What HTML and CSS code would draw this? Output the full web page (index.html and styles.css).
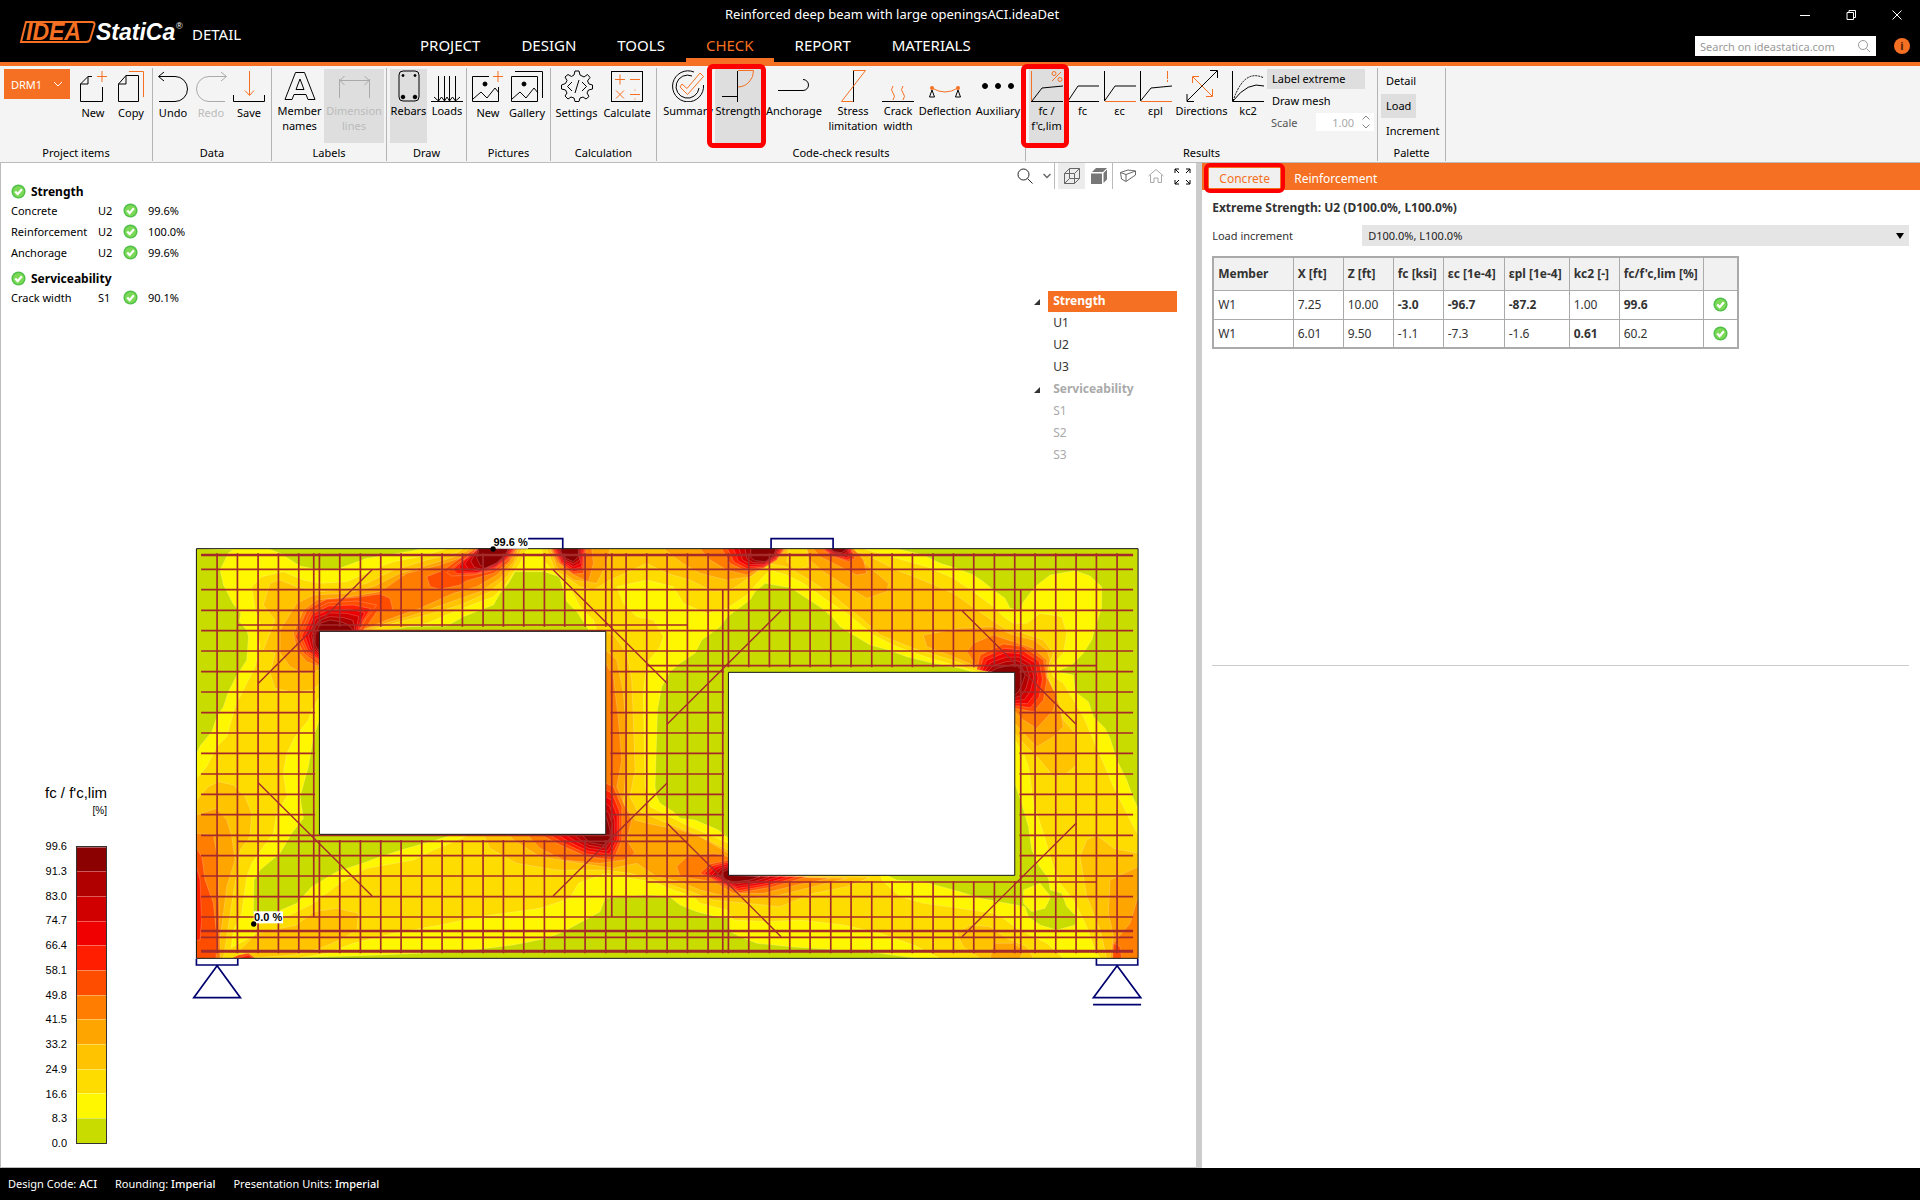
FILE: index.html
```html
<!DOCTYPE html>
<html lang="en">
<head>
<meta charset="utf-8">
<title>Reinforced deep beam with large openingsACI.ideaDet</title>
<link rel="stylesheet" href="styles.css">
<script src="plot.js" defer></script>
</head>
<body>
<svg width="0" height="0" class="defs" aria-hidden="true">
  <symbol id="ok" viewBox="0 0 16 16"><circle cx="8" cy="8" r="7.5" fill="#4fbf48"/><circle cx="8" cy="8" r="6" fill="#7bd957"/><path d="M4.5 8l2.6 2.8L11.6 5.6" fill="none" stroke="#fff" stroke-width="2.4"/></symbol>
</svg>
<header class="titlebar">
  <div class="brand">
    <svg class="logo" width="172" height="30" viewBox="0 0 172 30" role="img" aria-label="IDEA StatiCa">
      <path d="M7 5H73Q76 5 75.500 8L71 23Q70 25 67 25H2Z" fill="#000" stroke="#f57022" stroke-width="2"/>
      <text x="7" y="23" class="logo-idea">IDEA</text>
      <text x="77" y="23" class="logo-name">StatiCa</text>
      <text x="157" y="12" class="logo-reg">®</text>
    </svg>
    <span class="product">DETAIL</span>
  </div>
  <div class="head-main">
    <h1 class="doc-title">Reinforced deep beam with large openingsACI.ideaDet</h1>
    <nav class="tabs">
      <a href="#">PROJECT</a><a href="#">DESIGN</a><a href="#">TOOLS</a><a href="#" class="active">CHECK</a><a href="#">REPORT</a><a href="#">MATERIALS</a>
    </nav>
  </div>
  <div class="head-side">
    <div class="window-buttons">
      <button aria-label="Minimize"><svg width="12" height="12" viewBox="0 0 12 12"><path d="M1 6.500h10"/></svg></button>
      <button aria-label="Restore"><svg width="12" height="12" viewBox="0 0 12 12"><path d="M2 3.500h6.500V10.500H2zM4 3.500V1.500H10.500V8.500H8.500"/></svg></button>
      <button aria-label="Close"><svg width="12" height="12" viewBox="0 0 12 12"><path d="M1.500 1.500l9 9M10.500 1.500l-9 9"/></svg></button>
    </div>
    <div class="head-tools">
      <label class="search"><input type="text" placeholder="Search on ideastatica.com" aria-label="Search on ideastatica.com"><svg width="14" height="14" viewBox="0 0 14 14"><circle cx="6" cy="6" r="4.500"/><path d="M9.500 9.500l3.500 3.500"/></svg></label>
      <button class="info" aria-label="Information">i</button>
    </div>
  </div>
</header>

<div class="ribbon">
  <section class="group project">
    <div class="items">
      <button class="drm">DRM1<svg width="10" height="6" viewBox="0 0 10 6"><path d="M1 1l4 4 4-4" fill="none" stroke="#fff"/></svg></button>
      <button class="item low"><svg viewBox="0 0 32 32"><path d="M15 6.500H11L3.500 14V31.500H25.500V17M3.500 14H11V6.500"/><path class="o" d="M20 6.500h10M25 1v11"/></svg>New</button>
      <button class="item low"><svg viewBox="0 0 32 32"><path d="M11 5.500H23.500V31.500H3.500V14zM3.500 14H11V5.500"/><path class="o" d="M14 1.500H28.500V27"/></svg>Copy</button>
    </div><h2>Project items</h2>
  </section>
  <section class="group data">
    <div class="items">
      <button class="item low"><svg viewBox="0 0 32 32"><path d="M2 31.500H18A12.500 12.500 0 0 0 18 6.500H2M7 2L1.500 6.500L7 11"/></svg>Undo</button>
      <button class="item low" disabled><svg viewBox="0 0 32 32"><path d="M30 31.500H14A12.500 12.500 0 0 1 14 6.500H31M26 2L31.500 6.500L26 11"/></svg>Redo</button>
      <button class="item low"><svg viewBox="0 0 32 32"><path d="M.5 25V31.500H31.500V25"/><path class="o" d="M16.500 1V25M12 20.500L16.500 25.500L21 20.500"/></svg>Save</button>
    </div><h2>Data</h2>
  </section>
  <section class="group labels">
    <div class="items">
      <button class="item"><svg viewBox="0 0 32 32"><path d="M11.500 2.500H20.500L31 29.500H24L22 24.500H10L8 29.500H1L11.500 2.500zM16 9L12 19.500H20z"/></svg>Member names</button>
      <button class="item on" disabled><svg viewBox="0 0 32 32"><path d="M1.500 9V28M31.500 9V28M2 10.500H31M6.500 6L2 10.500L6.500 15M26.500 6L31 10.500L26.500 15"/></svg>Dimension lines</button>
    </div><h2>Labels</h2>
  </section>
  <section class="group draw">
    <div class="items">
      <button class="item on"><svg viewBox="0 0 32 32"><rect x="6" y="1" width="20" height="30" rx="4"/><circle class="f" cx="10" cy="5.500" r="1"/><circle class="f" cx="22" cy="5.500" r="1"/><circle class="f" cx="10" cy="27" r="1.800"/><circle class="f" cx="22" cy="27" r="1.800"/></svg>Rebars</button>
      <button class="item"><svg viewBox="0 0 32 32"><path d="M0 31.500H32M7.500 6V31M13.500 6V31M18.500 6V31M24.500 6V31M3 27l4.500 4L10.500 27L13.500 31L16 27L18.500 31L21.500 27L24.500 31L29 27"/></svg>Loads</button>
    </div><h2>Draw</h2>
  </section>
  <section class="group pictures">
    <div class="items">
      <button class="item low"><svg viewBox="0 0 32 32"><path d="M17 6.500H.5V31.500H26.500V17M1 29l8-7 6 6 8-10 4 5"/><circle class="f" cx="13" cy="14" r="2"/><path class="o" d="M21 6.500h10M26 1v11"/></svg>New</button>
      <button class="item low"><svg viewBox="0 0 32 32"><path d="M.5 6.500H26.500V31.500H.5zM4 1.500H31.500V28M1 29l8-7 6 6 8-10 4 5"/><circle class="f" cx="13" cy="14" r="2"/></svg>Gallery</button>
    </div><h2>Pictures</h2>
  </section>
  <section class="group calc">
    <div class="items">
      <button class="item low"><svg viewBox="0 0 32 32"><path d="M13 5L14 1H18L19 5L23 7L26.500 4.500L29 7.500L26.500 11L28 14L31.500 15V19L27.500 20L26 23L28 26.500L25 29L22 27L19 28L18 31.500H14L13 28L10 27L7 29L4 26L6 23L4.500 20L.5 19V15L4.500 13.500L6 10.500L4 7L7 4.500L10.500 6.500zM11 12L6.500 16.500L11 21M21 12L25.500 16.500L21 21M18 10L14 23"/></svg>Settings</button>
      <button class="item low"><svg viewBox="0 0 32 32"><rect x=".5" y="1.500" width="31" height="30"/><path class="o" d="M4 9.500h10M9 4.500v10M19 9.500h10M5 20.500l8 8M13 20.500l-8 8M19 24.500h10M23.500 20h1M23.500 29h1"/></svg>Calculate</button>
    </div><h2>Calculation</h2>
  </section>
  <section class="group codecheck">
    <div class="items">
      <button class="item"><svg viewBox="0 0 32 32"><path d="M22 2A15.500 15.500 0 1 0 31.500 15M20 6A11.500 11.500 0 1 0 27 18"/><path class="o" d="M10 14L15 18.500L28 3L31.500 6.500L15.500 24.500L8 17z"/></svg>Summary</button>
      <button class="item on marked"><svg viewBox="0 0 32 32"><path d="M0 26.500H15M15.500 1V32"/><path class="o" d="M16 .5H31.500A16 16 0 0 1 16 17"/></svg>Strength</button>
      <button class="item"><svg viewBox="0 0 32 32"><path d="M0 20.500H25A5 5 0 0 0 25 9.500"/></svg>Anchorage</button>
      <button class="item"><svg viewBox="0 0 32 32"><path d="M16.500 1V32"/><path class="o" d="M16 .5H28.500L4.500 31.500H16"/></svg>Stress limitation</button>
      <button class="item"><svg viewBox="0 0 32 32"><path d="M0 31.500H32"/><path class="o" d="M11 16q-3 4 0 7t0 7M21 16q-3 4 0 7t0 7"/></svg>Crack width</button>
      <button class="item"><svg viewBox="0 0 32 32"><path d="M3 20l-2.500 7h5zM29 20l-2.500 7h5z"/><path class="o" d="M3 18Q16 26 29 18"/><circle class="fo" cx="3" cy="18" r="2"/><circle class="fo" cx="29" cy="18" r="2"/></svg>Deflection</button>
      <button class="item"><svg viewBox="0 0 32 32"><circle class="f" cx="3" cy="16" r="2.500"/><circle class="f" cx="16" cy="16" r="2.500"/><circle class="f" cx="29" cy="16" r="2.500"/></svg>Auxiliary</button>
    </div><h2>Code-check results</h2>
  </section>
  <section class="group results">
    <div class="items">
      <button class="item on marked"><svg viewBox="0 0 32 32"><path d="M0 31.500H32M1 31L11 18L32 16"/><path class="o" d="M.5 1V31M30 2L21 11"/><circle class="o" cx="23" cy="3.500" r="2"/><circle class="o" cx="29" cy="9.500" r="2"/></svg>fc / f'c,lim</button>
      <button class="item"><svg viewBox="0 0 32 32"><path d="M.5 1V31.500H32M1 31L11 16H32"/></svg>fc</button>
      <button class="item"><svg viewBox="0 0 32 32"><path d="M.5 1V31L11 16H32"/><path class="o" d="M1 31.500H32"/></svg>εc</button>
      <button class="item"><svg viewBox="0 0 32 32"><path d="M.5 1V31L11 18L32 16"/><path class="o" d="M1 31.500H32M27.500 1V9M27.500 10V12"/></svg>εpl</button>
      <button class="item"><svg viewBox="0 0 32 32"><path d="M1 31L31 1M1 24V31.500H8M24 .5H31.500V8"/><path class="o" d="M7 7L26 26M6.500 13V6.500H13M26.500 19V26.500H20"/></svg>Directions</button>
      <button class="item"><svg viewBox="0 0 32 32"><path d="M.5 1V31.500H32M1 31Q16 11 32 16"/><path d="M1 31Q12 -2 32 8" stroke-dasharray="2 1"/></svg>kc2</button>
      <div class="stack">
        <button class="line on">Label extreme</button>
        <button class="line">Draw mesh</button>
        <label class="scale">Scale<span class="spin"><input type="text" value="1.00" disabled><svg width="8" height="14" viewBox="0 0 8 14"><path d="M.5 4.500L4 1l3.500 3.500M.5 9.500L4 13l3.500-3.500"/></svg></span></label>
      </div>
    </div><h2>Results</h2>
  </section>
  <section class="group palette">
    <div class="items"><button class="line">Detail</button><button class="line on">Load</button><button class="line">Increment</button></div>
    <h2>Palette</h2>
  </section>
</div>

<main>
  <section class="viewport">
    <svg class="drawing" viewBox="-537 -1071 3585 3012" role="img" aria-label="Concrete utilisation of the beam">
      <clipPath id="beam"><path d="M49 86H2874V1315H49z"/></clipPath>
      <g class="field" clip-path="url(#beam)">
        <path class="v2" d="M49 86H2874V1315H49z"/>
        <g class="v1">
          <path d="M49 86L160 90L145 98L120 150L130 195L158 250L182 280L178 305L200 330L205 350L200 420L168 470L145 515L130 560L110 590L95 635L62 675L49 700z"/>
          <path d="M265 86L300 100L360 138L420 150L470 148L560 115L600 108L700 92L720 86z"/>
          <path d="M1005 155L1093 155L1138 170L1160 245L1190 275L1220 320L1228 334H590L640 320L800 318L850 290L940 255L960 220L985 190z"/>
          <path d="M418 600L400 650L385 740L360 830L370 895L335 940L300 1000L240 1050L222 1080L220 1180L290 1175L350 1150L395 1100L470 1055L560 1025L600 1010L680 985L750 965L825 943H418z"/>
          <path d="M1430 830L1425 800L1430 640L1432 570L1445 500L1470 455L1500 430L1545 400L1565 360L1620 320L1642 290L1710 240L1725 215L1755 190L1830 203L1880 235L1925 265L1955 290L1980 320L2020 345L2070 375L2125 390L2180 410L2260 430L2340 445L2380 457H1645V955L1615 930L1580 915L1545 900L1500 895L1480 875L1440 850z"/>
          <path d="M300 1315L600 1305L830 1295L1000 1275L1100 1255L1150 1235L1215 1200L1260 1175L1275 1135L1400 1125L1468 1130L1500 1155L1550 1175L1610 1190L1645 1195L1650 1235L1680 1250L1730 1270L1830 1280L1980 1290L2100 1300L2210 1315z"/>
          <path d="M2150 86L2230 105L2280 130L2330 145L2380 165L2410 185L2440 210L2475 235L2490 265L2520 270L2530 245L2565 200L2610 165L2685 152L2730 168L2765 200V260L2750 310L2735 360L2710 400L2675 435L2630 455L2680 465L2685 515L2725 545L2740 590L2775 625L2790 655L2810 720L2840 780L2860 835L2874 865V86z"/>
          <path d="M2504 790L2525 850L2545 920L2555 990L2575 1035L2605 1075L2610 1110L2645 1120L2660 1160L2690 1190L2685 1215L2630 1230L2580 1215L2545 1190L2535 1160L2400 1135L2340 1115L2230 1085L2150 1080L2120 1066H2504z"/>
        </g>
        <path class="v2" d="M2530 1110L2580 1090L2612 1130L2595 1165L2555 1175L2530 1150z"/>
        <g class="v3">
          <path d="M49 775L80 740L110 680L140 650L165 560L190 510L225 440L240 380L230 330L240 310L225 270L215 200L245 170L310 155L370 180L420 190L500 185L545 165L600 140L640 125L720 110L800 86H1040L1020 130L975 195L940 230L860 260L800 285L740 310L660 325L590 334H418V530L395 570L385 600L345 650L320 700L310 760L320 830L290 880L280 940L250 980L215 1030L200 1070L185 1180L160 1230L150 1315H49z"/>
          <path d="M1085 86L1090 120L1130 165L1165 195L1200 260L1240 300L1250 334H1277V943H870L820 965L760 990L700 1020L560 1045L480 1090L400 1150L330 1185L230 1215L225 1245L140 1290L100 1315H350L440 1300L520 1270L640 1240L780 1215L900 1190L1080 1165L1170 1135L1195 1090L1277 1060L1350 1075L1420 1085L1480 1110L1540 1130L1560 1150L1640 1170L1660 1200L1760 1205L1860 1200L1990 1215L2100 1240L2200 1275L2280 1315H2650L2600 1270L2560 1250L2510 1225L2470 1195L2440 1180L2340 1165L2230 1150L2160 1130L2110 1085L2100 1066H1645V970L1590 945L1530 920L1470 890L1410 860L1395 800L1390 520L1400 430L1440 380L1450 350L1420 300L1370 290L1330 250L1310 200L1400 180L1480 200L1510 250L1580 280L1640 265L1700 225L1740 180L1770 150L1820 165L1870 190L1940 240L2000 280L2080 345L2150 380L2250 415L2340 440L2400 457H2504V660L2530 700L2545 740L2560 850L2590 940L2620 1040L2640 1090L2680 1140L2720 1220L2745 1290L2760 1315H2874V945L2850 900L2800 800L2775 740L2740 660L2710 590L2680 540L2650 490L2620 470L2610 440L2650 400L2660 340L2645 290L2580 280L2540 310L2500 310L2470 290L2440 260L2380 215L2320 175L2240 140L2150 115L2050 86z"/>
        </g>
        <g class="v4">
          <path d="M49 840L85 800L115 785L160 795L195 830L215 880L210 950L180 990L170 1060L155 1150L140 1250L130 1315H49z"/>
          <path d="M250 255L270 190L300 180L350 200L420 215L500 205L560 190L640 150L740 120L830 98L850 86H1025L1010 120L985 165L930 215L840 255L740 285L640 310L560 334H418V490L400 510L330 515L285 505L270 460L285 400L250 390L285 300z"/>
          <path d="M230 1240L350 1215L400 1175L470 1165L535 1180L530 1230L480 1260L420 1285L340 1305L200 1315L180 1290z"/>
          <path d="M1100 86L1125 150L1200 200L1240 210L1290 180L1400 130L1460 160L1530 180L1600 215L1660 205L1720 165L1760 130L1820 140L1880 175L1950 220L2050 300L2100 345L2200 385L2300 415L2400 450L2504 457V640L2540 680L2580 720L2620 770L2660 760L2690 735L2685 640L2650 600L2620 520L2600 450L2620 400L2590 360L2530 340L2480 330L2420 290L2320 220L2250 190L2150 150L2060 105L2000 86z"/>
          <path d="M1277 334L1300 345L1340 400L1355 480L1360 600L1365 750L1350 830L1370 870L1450 905L1540 940L1645 990V1066L2070 1072L2000 1100L1900 1120L1800 1160L1700 1150L1600 1140L1520 1110L1440 1085L1350 1060L1277 1050L1130 1050L1010 1030L930 985L910 943H1277z"/>
          <path d="M2330 1240L2370 1215L2430 1220L2480 1255L2540 1280L2560 1315H2400L2350 1280zM2700 1010L2720 960L2750 945L2800 985L2874 1000V1315H2780L2760 1230L2720 1130z"/>
        </g>
        <path class="v3" d="M1825 86L1820 125L1845 150L1885 140L1880 86z"/>
        <g class="v5">
          <path d="M49 885L110 865L140 900L155 950L165 1020L140 1100L125 1220L110 1315H49z"/>
          <path d="M300 330L350 250L400 225L500 220L580 200L660 160L760 130L840 105L870 86H1015L1000 125L960 175L900 215L800 250L700 285L600 315L540 334H418V450L370 460L330 440L300 400z"/>
          <path d="M1110 86L1130 140L1180 180L1250 190L1280 130L1290 86z"/>
          <path d="M1277 390L1310 420L1330 520L1340 650L1335 780L1330 850L1365 900L1400 910L1500 930L1560 950L1645 1000V1066L2000 1075L1900 1100L1800 1125L1720 1135L1640 1130L1560 1110L1500 1085L1430 1070L1370 1030L1300 1045L1200 1030L1080 1010L1000 960L985 943H1277z"/>
          <path d="M1450 86L1500 125L1560 160L1640 180L1710 170L1750 140L1800 110L1820 86zM1880 86L1890 120L1930 155L2000 200L2060 235L2120 215L2125 190L2060 135L2010 100L1990 86z"/>
          <path d="M2230 345L2340 325L2440 320L2500 345L2560 360L2600 390L2610 420L2600 470L2640 560L2650 620L2620 650L2570 680L2540 650L2504 610V457L2390 440L2320 410L2240 380z"/>
          <path d="M2790 1080L2874 1040V1315H2790L2800 1250L2785 1180zM2440 1270L2500 1270L2530 1290L2520 1315H2430z"/>
        </g>
        <g class="v6">
          <path d="M49 940L100 945L110 1000L115 1100L118 1180L120 1315H49z"/>
          <path d="M340 340L370 270L410 240L510 230L600 215L680 160L780 135L850 110L880 86H1010L990 125L950 165L890 200L820 220L720 265L620 300L560 325L520 334H418V440L380 425L350 390z"/>
          <path d="M1113 86L1130 125L1180 165L1225 185L1240 130L1235 86z"/>
          <path d="M1277 430L1300 470L1315 600L1325 720L1310 800L1335 860L1355 900L1340 960L1365 1000L1330 1020L1260 1030L1150 1020L1080 985L1040 943H1277z"/>
          <path d="M1490 1040L1520 1010L1600 1000L1645 1010V1066L1950 1075L1850 1095L1750 1120L1660 1120L1600 1085L1500 1070z"/>
          <path d="M1560 86L1590 120L1640 150L1700 165L1750 140L1790 115L1815 86zM1900 86L1920 110L1980 140L2030 165L2060 160L2050 120L2020 86z"/>
          <path d="M2360 395L2380 370L2440 345L2500 365L2560 385L2600 420L2600 470L2630 530L2620 570L2570 625L2530 600L2504 575V457L2390 440z"/>
          <path d="M2874 1130V1315H2800V1270L2850 1210z"/>
        </g>
        <g class="v7">
          <path d="M49 985L65 1010L75 1080L100 1150L110 1250L108 1315H49zM2800 1270L2820 1280L2825 1315H2798zM155 1315L175 1305L205 1300L225 1315z"/>
          <path d="M740 170L790 150L850 108L890 86H1007L985 125L940 160L860 182L840 195L780 208L750 200z"/>
          <path d="M346 350L382 268L440 238L530 232L600 222L630 235L638 270L590 275L565 312L545 334H418V436L372 400z"/>
        </g>
        <path class="v8" d="M49 1040L60 1080L64 1200L60 1260H49zM170 1315L205 1305L218 1315z"/>
        <g id="peaks"></g>
      </g>
      <path id="mesh" class="bar"/>
      <path class="bar diag" d="M235 490L576 149M1119 149L1461 490M235 789L576 1128M1119 1128L1461 789M1461 613L1803 272M2346 272L2688 613M1461 910L1803 1250M2346 1250L2688 910"/>
      <path class="bar thick" d="M63 105H2859M63 1233H2859"/>
      <path class="bar main" d="M63 1294H2859"/>
      <g class="edge"><path class="hole" d="M418 334H1277V943H418zM1645 457H2504V1066H1645z"/><path d="M49 86H2874V1315H49z"/></g>
      <path class="support" d="M962 86V56H1148V86M1773 86V56H1959V86M49 1316V1335H173V1316M111 1337L41 1433H181zM2749 1316V1335H2873V1316M2811 1337L2740 1433H2882zM2739 1454H2883"/>
      <rect class="tag" x="938" y="50" width="106" height="36"/><rect class="tag" x="221" y="1174" width="88" height="36"/>
      <circle cx="939" cy="87" r="8"/><circle cx="221" cy="1212" r="8"/>
      <text class="tag-text" x="940" y="77">99.6 %</text><text class="tag-text" x="222" y="1202">0.0 %</text>
    </svg>

    <div class="summary">
      <h3><svg><use href="#ok"/></svg>Strength</h3>
      <table>
        <tr><td>Concrete</td><td>U2</td><td><svg><use href="#ok"/></svg></td><td>99.6%</td></tr>
        <tr><td>Reinforcement</td><td>U2</td><td><svg><use href="#ok"/></svg></td><td>100.0%</td></tr>
        <tr><td>Anchorage</td><td>U2</td><td><svg><use href="#ok"/></svg></td><td>99.6%</td></tr>
      </table>
      <h3><svg><use href="#ok"/></svg>Serviceability</h3>
      <table>
        <tr><td>Crack width</td><td>S1</td><td><svg><use href="#ok"/></svg></td><td>90.1%</td></tr>
      </table>
    </div>

    <div class="viewtools">
      <button class="wide" aria-label="Zoom"><svg width="16" height="16" viewBox="0 0 16 16"><circle cx="6.500" cy="6.500" r="5.500"/><path d="M10.500 10.500l5 5"/></svg></button>
      <button class="slim" aria-label="Zoom options"><svg width="8" height="6" viewBox="0 0 8 6"><path d="M.5 1L4 4.500L7.500 1" stroke-width="1.500"/></svg></button>
      <button class="on" aria-label="Wireframe"><svg width="16" height="16" viewBox="0 0 16 16"><path d="M.5 5.500h10v10H.5zM5.500 .5H15.500V10.500H5.500zM.5 5.500L5.500 .5M10.500 5.500L15.500 .5M10.500 15.500L15.500 10.500M.5 15.500L5.500 10.500"/></svg></button>
      <button aria-label="Solid"><svg width="16" height="16" viewBox="0 0 16 16"><path d="M0 5.500h11V16H0zM1 4L5 0H16L12 4zM12.500 5L16 1.500V11.500L12.500 15z" fill="#777" stroke="none"/></svg></button>
      <button class="split" aria-label="Section"><svg width="16" height="14" viewBox="0 0 16 14"><path d="M.5 3.500L8 1L15.500 2V6L6 12.500L1.500 10zM.5 3.500L6 5.500L15.500 2M6 5.500V12"/></svg></button>
      <button class="pale" aria-label="Home"><svg width="16" height="14" viewBox="0 0 16 14"><path d="M.5 7L8 .5L15.500 7M2.500 6V13.500H6V9h4v4.500h3.500V6"/></svg></button>
      <button class="dark" aria-label="Fit"><svg width="17" height="17" viewBox="0 0 17 17"><path d="M1 5V1H5M1 1l4 4M12 1h4V5M16 1l-4 4M1 12v4H5M1 16l4-4M16 12v4H12M16 16l-4-4"/></svg></button>
    </div>

    <ul class="tree">
      <li class="parent selected"><span>Strength</span></li><li><span>U1</span></li><li><span>U2</span></li><li><span>U3</span></li>
      <li class="parent off"><span>Serviceability</span></li><li class="off"><span>S1</span></li><li class="off"><span>S2</span></li><li class="off"><span>S3</span></li>
    </ul>

    <div class="legend">
      <div class="legend-title">fc / f'c,lim</div><div class="legend-unit">[%]</div>
      <div class="legend-body">
        <ol><li>99.6</li><li>91.3</li><li>83.0</li><li>74.7</li><li>66.4</li><li>58.1</li><li>49.8</li><li>41.5</li><li>33.2</li><li>24.9</li><li>16.6</li><li>8.3</li><li>0.0</li></ol>
        <div class="scalebar"><i class="v12"></i><i class="v11"></i><i class="v10"></i><i class="v9"></i><i class="v8"></i><i class="v7"></i><i class="v6"></i><i class="v5"></i><i class="v4"></i><i class="v3"></i><i class="v2"></i><i class="v1"></i></div>
      </div>
    </div>
  </section>

  <aside class="panel">
    <nav class="panel-tabs"><button class="active">Concrete</button><button>Reinforcement</button></nav>
    <div class="panel-body">
      <h3>Extreme Strength: U2 (D100.0%, L100.0%)</h3>
      <div class="field-row"><label for="inc">Load increment</label><div class="select"><select id="inc"><option>D100.0%, L100.0%</option></select></div></div>
      <table class="grid">
        <colgroup><col class="c80"><col class="c50"><col class="c50"><col class="c50"><col class="c61"><col class="c65"><col class="c50"><col class="c84"><col class="c35"></colgroup>
        <thead><tr><th>Member</th><th>X [ft]</th><th>Z [ft]</th><th>fc [ksi]</th><th>εc [1e-4]</th><th>εpl [1e-4]</th><th>kc2 [-]</th><th>fc/f'c,lim [%]</th><th></th></tr></thead>
        <tbody>
          <tr><td>W1</td><td>7.25</td><td>10.00</td><td><b>-3.0</b></td><td><b>-96.7</b></td><td><b>-87.2</b></td><td>1.00</td><td><b>99.6</b></td><td><svg><use href="#ok"/></svg></td></tr>
          <tr><td>W1</td><td>6.01</td><td>9.50</td><td>-1.1</td><td>-7.3</td><td>-1.6</td><td><b>0.61</b></td><td>60.2</td><td><svg><use href="#ok"/></svg></td></tr>
        </tbody>
      </table>
      <hr>
    </div>
  </aside>
</main>
<footer><span>Design Code: <b>ACI</b></span><span>Rounding: <b>Imperial</b></span><span>Presentation Units: <b>Imperial</b></span></footer>
</body>
</html>
```
FILE: styles.css
```css
* { box-sizing: border-box; }
html, body { height: 100%; }
body { margin: 0; display: flex; flex-direction: column; background: #fff; color: #000; font: 12px/15px "Noto Sans", "Open Sans", sans-serif; overflow: hidden; }
h1, h2, h3, ul, ol { margin: 0; padding: 0; font: inherit; list-style: none; }
button, input, select { font: inherit; color: inherit; border: 0; background: none; padding: 0; margin: 0; }
.defs { position: absolute; }

/* Title bar */
.titlebar { display: flex; height: 66px; flex: none; background: #000; color: #fff; border-bottom: 4px solid #f57022; }
.brand { width: 400px; padding: 17px 0 0 19px; display: flex; align-items: flex-start; }
.logo-idea { font: italic bold 23px "Liberation Sans", sans-serif; fill: #f57022; }
.logo-name { font: italic bold 23px "Liberation Sans", sans-serif; fill: #fff; }
.logo-reg { font: 9px "Liberation Sans", sans-serif; fill: #fff; }
.product { font-size: 15px; line-height: 20px; margin: 7px 0 0 1px; }
.head-main { flex: 1; display: flex; flex-direction: column; justify-content: space-between; }
.doc-title { padding: 4px 0 0 325px; line-height: 20px; font-size: 13px; }
.tabs { display: flex; gap: 1px; }
.tabs a { padding: 0 20px 3px; border-bottom: 4px solid transparent; color: #fff; text-decoration: none; font-size: 15px; line-height: 20px; }
.tabs a.active { color: #f57022; border-color: #f57022; }
.head-side { display: flex; flex-direction: column; align-items: flex-end; }
.window-buttons { display: flex; height: 30px; }
.window-buttons button { width: 46px; }
.window-buttons svg { fill: none; stroke: #fff; display: block; margin: auto; }
.head-tools { display: flex; align-items: center; gap: 18px; padding: 6px 10px 0 0; }
.search { display: flex; align-items: center; width: 181px; height: 20px; padding: 0 5px; background: #fff; }
.search input { flex: 1; min-width: 0; font-size: 11px; outline: 0; }
.search input::placeholder { color: #999; }
.search svg { fill: none; stroke: #999; }
.info { width: 16px; height: 16px; border-radius: 50%; background: #f57022; color: #512308; font-weight: bold; font-size: 11px; line-height: 16px; }

/* Ribbon */
.ribbon { display: flex; flex: none; height: 97px; padding: 2px 0 1px; background: #f4f4f4; border-bottom: 1px solid #bcbcbc; }
.group { display: flex; flex-direction: column; border-right: 1px solid #b4b4b4; }
.items { display: grid; flex: 1; padding: 1px 0 0; align-items: start; font-size: 11px; }
.group h2 { text-align: center; font-size: 11px; line-height: 16px; }
.item { position: relative; display: flex; flex-direction: column; align-items: center; height: 74px; padding-top: 1px; line-height: 15px; text-align: center; min-width: 0; }
.item svg { width: 32px; height: 32px; margin-bottom: 1px; flex: none; fill: none; stroke: #000; }
.item.low svg { margin-bottom: 3px; }
.item .o { stroke: #f57022; }
.item .f { fill: #000; }
.item .fo { fill: #f57022; stroke: none; }
.item:disabled { color: #bbb; }
.item:disabled svg { stroke: #aaa; }
.on { background: #dedede; }
.marked::after { content: ""; position: absolute; inset: -5px -5px -5px -8px; border: 5px solid #f00; border-radius: 6px; z-index: 1; }
.project { width: 153px; } .project .items { grid-template-columns: 70px 38px 38px; padding-left: 4px; }
.data { width: 119px; } .data .items { grid-template-columns: 38px 38px 38px; padding-left: 1px; }
.labels { width: 115px; } .labels .items { grid-template-columns: 49px 60px; padding-left: 3px; }
.draw { width: 80px; } .draw .items { grid-template-columns: 37px 38px; padding-left: 3px; column-gap: 1px; }
.pictures { width: 84px; } .pictures .items { grid-template-columns: 38px 40px; padding-left: 2px; }
.calc { width: 106px; } .calc .items { grid-template-columns: 47px 54px; padding-left: 2px; }
.codecheck { width: 369px; } .codecheck .items { grid-template-columns: 54px 46px 66px 52px 38px 56px 50px; padding-left: 4px; }
.results { width: 352px; } .results .items { grid-template-columns: 35px 37px 37px 35px 57px 36px 108px; padding-left: 3px; }
.palette { width: 68px; } .palette .items { padding: 1px 0 0 3px; justify-items: start; align-content: start; row-gap: 1px; }
.drm { width: 66px; height: 30px; background: #f57022; color: #fff; display: flex; align-items: center; justify-content: space-between; padding: 0 7px; }
.stack { display: flex; flex-direction: column; align-items: flex-start; gap: 2px; padding-left: 1px; }
.line { height: 20px; padding: 0 5px; text-align: left; line-height: 20px; }
.stack .line:first-child { width: 98px; }
.palette .line { height: 24px; padding: 0 5px; line-height: 24px; }
.scale { display: flex; justify-content: space-between; align-items: center; width: 107px; padding-left: 4px; color: #555; }
.spin { display: flex; align-items: center; width: 58px; height: 18px; background: #fff; padding-right: 4px; }
.spin input { width: 38px; text-align: right; color: #aaa; margin-right: auto; }
.spin svg { fill: none; stroke: #888; }

/* Workspace */
main { flex: 1; min-height: 0; display: flex; }
.viewport { flex: 1; min-width: 0; position: relative; border: solid #bcbcbc; border-width: 0 0 1px 1px; }
.drawing { position: absolute; inset: 0; width: 100%; height: 100%; }
.v1 { fill: #c8dc00; background: #c8dc00; } .v2 { fill: #fff700; background: #fff700; } .v3 { fill: #ffdc00; background: #ffdc00; }
.v4 { fill: #ffc300; background: #ffc300; } .v5 { fill: #ffa500; background: #ffa500; } .v6 { fill: #ff7d00; background: #ff7d00; }
.v7 { fill: #ff4d00; background: #ff4d00; } .v8 { fill: #ff1e00; background: #ff1e00; } .v9 { fill: #f00000; background: #f00000; }
.v10 { fill: #d00000; background: #d00000; } .v11 { fill: #b00000; background: #b00000; } .v12 { fill: #8b0000; background: #8b0000; }
.field { stroke: rgba(255, 255, 255, .3); stroke-width: 2; }
.bar { fill: none; stroke: #a52a2a; stroke-width: 5; }
.bar.diag { stroke-width: 4; } .bar.thick { stroke-width: 7; } .bar.main { stroke-width: 9; }
.edge { fill: none; stroke: #111; stroke-width: 3; }
.hole { fill: #fff; }
.support { fill: none; stroke: #000070; stroke-width: 5; }
.tag { fill: #fff; }
.tag-text { font: bold 33px "Liberation Sans", sans-serif; }

.summary { position: absolute; left: 10px; top: 19px; font-size: 11px; }
.summary h3 { display: flex; align-items: center; gap: 5px; height: 18px; font-weight: bold; font-size: 12px; }
.summary svg, .grid svg { width: 15px; height: 15px; display: block; }
.summary table { border-collapse: collapse; margin-bottom: 6px; }
.summary td { height: 21px; padding: 0; }
.summary td:nth-child(1) { width: 87px; } .summary td:nth-child(2) { width: 25px; } .summary td:nth-child(3) { width: 25px; }

.viewtools { position: absolute; right: 0; top: 0; display: flex; height: 26px; }
.viewtools button { width: 27px; display: grid; place-items: center; }
.viewtools .wide { width: 30px; } .viewtools .slim { width: 15px; border-right: 1px solid #bbb; margin-right: 3px; }
.viewtools .on { background: #ececec; }
.viewtools .split { border-left: 1px solid #bbb; width: 30px; }
.viewtools svg { fill: none; stroke: #666; }
.viewtools .wide svg { stroke: #222; }
.viewtools .pale svg { stroke: #aaa; } .viewtools .dark svg { stroke: #000; }

.tree { position: absolute; right: 19px; top: 128px; width: 129px; color: #333; }
.tree li { position: relative; height: 22px; line-height: 20px; }
.tree span { display: block; height: 21px; padding: 0 5px; }
.tree .parent { font-weight: bold; }
.tree .parent::before { content: ""; position: absolute; left: -14px; top: 8px; border: 3px solid #333; border-top-color: transparent; border-left-color: transparent; }
.tree .selected span { background: #f57022; color: #fff; }
.tree .off { color: #aaa; }

.legend { position: absolute; left: 32px; bottom: 17px; width: 74px; font-family: "Liberation Sans", sans-serif; text-align: right; }
.legend-title { font-size: 15px; line-height: 20px; white-space: nowrap; }
.legend-unit { font-size: 10px; line-height: 16px; margin-bottom: 20px; }
.legend-body { display: flex; justify-content: flex-end; align-items: center; gap: 9px; }
.legend ol { display: flex; flex-direction: column; justify-content: space-between; height: 311px; line-height: 14px; font-size: 11px; }
.scalebar { display: flex; flex-direction: column; width: 31px; height: 298px; border: 1px solid #333; }
.scalebar i { flex: 1; border-top: 1px solid rgba(255, 255, 255, .35); }

/* Results panel */
.panel { width: 37.7%; border-left: 6px solid #ccc; }
.panel-tabs { display: flex; height: 27px; padding: 5px 7px 2px; background: #f57022; color: #fff; }
.panel-tabs button { position: relative; padding: 0; margin-right: 14px; }
.panel-tabs .active { width: 71px; background: #f0f0f0; color: #f57022; }
.panel-tabs .active::after { content: ""; position: absolute; inset: -5px; border: 4px solid #f00; border-radius: 6px; }
.panel-body { padding: 9px 11px 0 10px; color: #333; }
.panel-body h3 { font-weight: bold; line-height: 18px; margin-bottom: 8px; }
.field-row { display: flex; align-items: center; font-size: 11px; }
.field-row label { width: 150px; }
.select { flex: 1; position: relative; }
.select select { width: 100%; height: 21px; padding: 0 6px; appearance: none; background: #e5e5e5; color: #222; }
.select::after { content: ""; position: absolute; right: 5px; top: 8px; border: 4px solid transparent; border-top: 6px solid #000; border-bottom: 0; }
.grid { table-layout: fixed; width: 526px; margin-top: 10px; border-collapse: collapse; border: 2px solid #aaa; }
.grid th, .grid td { border: 1px solid #aaa; text-align: left; padding: 0 4px; height: 29px; white-space: nowrap; }
.grid th { height: 33px; background: #f1f1f1; }
.grid svg { margin: auto; }
.c80 { width: 80px; } .c50 { width: 50px; } .c61 { width: 61px; } .c65 { width: 65px; } .c84 { width: 84px; } .c35 { width: 35px; }
.panel hr { border: 0; border-top: 1px solid #ccc; margin: 316px 0 0; }

footer { flex: none; display: flex; align-items: center; gap: 18px; height: 32px; padding: 0 8px 2px; background: #000; color: #fff; font-size: 11px; }
footer b { font-weight: 500; }
```
FILE: plot.js
```js
// Rebar layout: a regular mesh, interrupted by the two openings.
const STEP = 61.36;
const mesh = [];
const v = (x, a, b) => mesh.push(`M${x} ${a}V${b}`);
const h = (y, a, b) => mesh.push(`M${a} ${y}H${b}`);
for (let k = 0; k < 45; k++) {
  const x = Math.round(111 + k * STEP);
  if (k >= 5 && k <= 19) { v(x, 100, 320); v(x, 960, 1300); }
  else if (k >= 25 && k <= 39) { v(x, 100, 442); v(x, 1083, 1300); }
  else v(x, 100, 1300);
}
v(401, 100, 1190); v(1295, 100, 1190); v(1628, 208, 1300); v(2522, 208, 1300);
for (let k = 0; k < 19; k++) {
  const y = Math.round(148 + k * STEP);
  const first = y > 340 && y < 940, second = y > 450 && y < 1070;
  let x = 63;
  if (first) { h(y, x, 405); x = 1291; }
  if (second) { h(y, x, 1632); x = 2518; }
  h(y, x, 2859);
}
h(315, 173, 1523); h(964, 173, 1523); h(437, 1400, 2750); h(1086, 1400, 2750);
document.getElementById('mesh').setAttribute('d', mesh.join(''));

// Stress peaks: outer and inner contour of each, with the levels between them interpolated.
const peaks = [
  [[355,350,390,275,445,248,530,243,590,255,555,300,540,334,418,334,418,425,380,400],
   [405,345,420,310,450,300,480,305,500,312,515,325,520,334,418,334,418,395,405,375]],
  [[800,158,830,132,865,108,895,86,1005,86,985,118,940,152,880,165,815,168],
   [890,115,892,105,895,95,893,86,985,86,975,105,950,128,915,145,900,135]],
  [[1116,86,1140,130,1180,162,1210,160,1218,86],[1140,86,1150,112,1180,125,1195,110,1195,86]],
  [[1277,790,1300,800,1325,860,1325,960,1300,1020,1220,1010,1140,975,1080,943,1277,943],
   [1277,890,1282,900,1290,930,1290,955,1270,975,1230,968,1215,955,1205,943,1277,943]],
  [[1560,1060,1590,1032,1645,1020,1645,1066,1880,1070,1780,1100,1680,1118,1630,1095],
   [1622,1066,1630,1055,1645,1048,1645,1066,1740,1070,1710,1080,1660,1086,1640,1080]],
  [[1625,86,1650,130,1695,152,1750,145,1790,120,1812,86],[1712,86,1712,112,1725,122,1755,125,1780,108,1788,86]],
  [[1925,86,1960,110,2005,125,2025,115,2015,86],[1950,86,1962,95,1985,98,1995,92,1998,86]],
  [[2400,405,2470,372,2530,380,2590,420,2600,480,2590,540,2560,575,2504,565,2504,457,2390,449],
   [2450,445,2480,438,2505,432,2525,440,2535,465,2525,495,2515,515,2504,525,2504,457,2430,457]]
];
const layer = document.getElementById('peaks');
for (let level = 7; level <= 12; level++) {
  const t = (level - 7) / 5;
  for (const [outer, inner] of peaks) {
    const p = document.createElementNS('http://www.w3.org/2000/svg', 'polygon');
    p.setAttribute('class', 'v' + level);
    p.setAttribute('points', outer.map((n, i) => Math.round(n + (inner[i] - n) * t)).join(' '));
    layer.append(p);
  }
}
```
